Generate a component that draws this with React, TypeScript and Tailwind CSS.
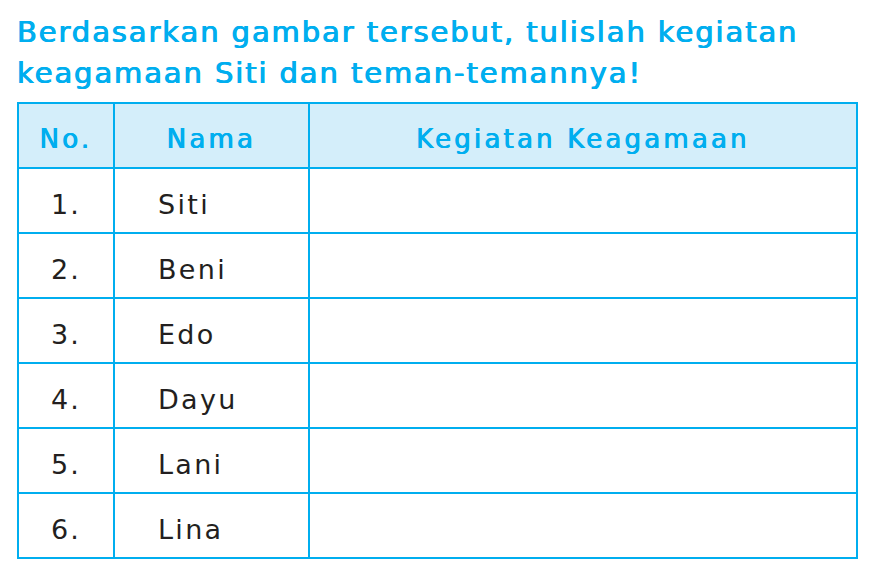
import React from "react";

const rows = [
  ["1.", "Siti"],
  ["2.", "Beni"],
  ["3.", "Edo"],
  ["4.", "Dayu"],
  ["5.", "Lani"],
  ["6.", "Lina"],
];

const th =
  "border-2 border-[#00aeef] text-[26px] font-normal text-[#00aeef] text-center pt-[7px] tracking-[3.2px] [text-shadow:0.45px_0_0_#00aeef,-0.45px_0_0_#00aeef]";

export default function App() {
  return (
    <div
      className="w-[887px] h-[569px] bg-white pl-[17px] pt-[12px]"
      style={{ fontFamily: '"DejaVu Sans", "Noto Sans", sans-serif' }}
    >
      <h1 className="text-[29px] leading-[41px] font-normal text-[#00aeef] tracking-[1.9px] [text-shadow:0.5px_0_0_#00aeef,-0.5px_0_0_#00aeef]">
        Berdasarkan gambar tersebut, tulislah kegiatan
        <br />
        keagamaan Siti dan teman-temannya!
      </h1>
      <table className="mt-[8px] border-collapse w-[841px] table-fixed">
        <colgroup>
          <col className="w-[96px]" />
          <col className="w-[195px]" />
          <col />
        </colgroup>
        <thead>
          <tr className="h-[65px] bg-[#d4eefa]">
            <th className={th}>No.</th>
            <th className={th}>Nama</th>
            <th className={th}>Kegiatan Keagamaan</th>
          </tr>
        </thead>
        <tbody>
          {rows.map(([n, name]) => (
            <tr key={n} className="h-[65px]">
              <td className="border-2 border-[#00aeef] text-[27px] text-[#231f20] text-center pt-[9px] tracking-[2px]">{n}</td>
              <td className="border-2 border-[#00aeef] text-[27px] text-[#231f20] pl-[43px] pt-[9px] tracking-[2.3px]">{name}</td>
              <td className="border-2 border-[#00aeef]"></td>
            </tr>
          ))}
        </tbody>
      </table>
    </div>
  );
}
